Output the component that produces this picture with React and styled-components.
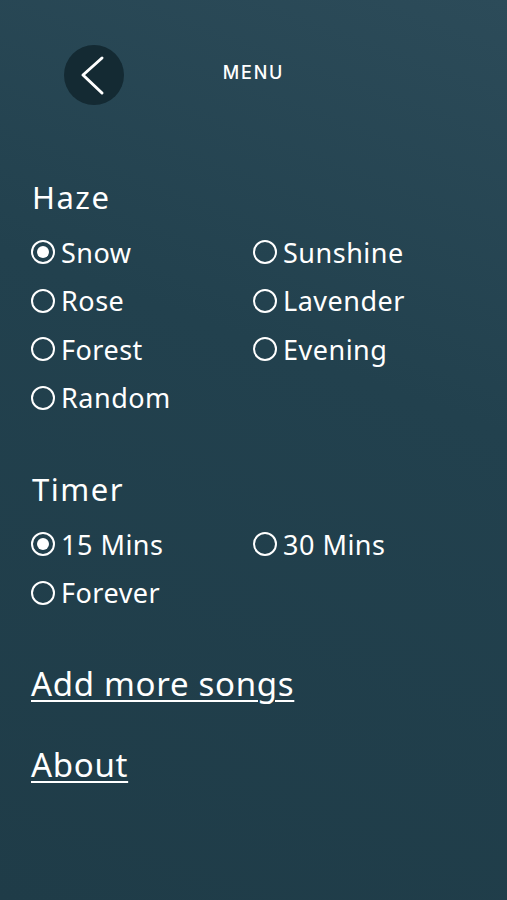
import React, { useState } from "react";
import styled, { createGlobalStyle } from "styled-components";

const Global = createGlobalStyle`
  html, body { margin: 0; padding: 0; }
  body { font-family: "Noto Sans", "Open Sans", sans-serif; color: #fff; background: #1f3c48; }
`;

const Page = styled.div`
  min-height: 900px;
  box-sizing: border-box;
  padding: 45px 0 0 0;
  background: linear-gradient(200deg, #2c4b59 0%, #22414e 40%, #1f3c48 100%);
`;

const Header = styled.header`
  display: grid;
  grid-template-columns: 1fr auto 1fr;
  align-items: center;
  height: 60px;
  padding-left: 64px;
`;

const BackButton = styled.button`
  width: 60px;
  height: 60px;
  border-radius: 50%;
  border: none;
  background: #142a33;
  display: flex;
  align-items: center;
  justify-content: center;
  padding: 0;
  cursor: pointer;
  justify-self: start;
`;

const Title = styled.div`
  font-family: "Inter", "Lato", sans-serif;
  font-size: 18px;
  font-weight: 500;
  letter-spacing: 1.8px;
  transform: translateX(-32px);
  margin-top: -6px;
`;

const Content = styled.main`
  padding: 0 32px 0 31px;
`;

const Section = styled.section`
  margin-top: ${(p) => p.$top}px;
`;

const Heading = styled.h2`
  margin: 0 0 11px 1px;
  font-size: 31px;
  font-weight: 400;
  letter-spacing: 1.5px;
  line-height: 40px;
`;

const Options = styled.div`
  display: grid;
  grid-template-columns: 222px 1fr;
  grid-auto-rows: 48.5px;
`;

const Option = styled.label`
  display: flex;
  align-items: center;
  gap: 6px;
  font-size: 27px;
  letter-spacing: 0.5px;
  line-height: 1;
  cursor: pointer;
`;

const Circle = styled.span`
  width: 24px;
  height: 24px;
  box-sizing: border-box;
  border: 2.5px solid #fff;
  border-radius: 50%;
  display: flex;
  align-items: center;
  justify-content: center;
  flex-shrink: 0;
  &::after {
    content: "";
    width: 12px;
    height: 12px;
    border-radius: 50%;
    background: #fff;
    display: ${(p) => (p.$on ? "block" : "none")};
  }
`;

const LinkText = styled.a`
  display: block;
  color: #fff;
  font-size: 33px;
  letter-spacing: 0.7px;
  line-height: 44px;
  text-decoration: underline;
  text-decoration-thickness: 2px;
  text-underline-offset: 4px;
  margin-top: ${(p) => p.$top}px;
  width: max-content;
`;

function Group({ title, items, value, onChange, top }) {
  return (
    <Section $top={top}>
      <Heading>{title}</Heading>
      <Options>
        {items.map((it) => (
          <Option key={it} onClick={() => onChange(it)}>
            <Circle $on={value === it} />
            {it}
          </Option>
        ))}
      </Options>
    </Section>
  );
}

export default function App() {
  const [haze, setHaze] = useState("Snow");
  const [timer, setTimer] = useState("15 Mins");
  return (
    <>
      <Global />
      <Page>
        <Header>
          <BackButton aria-label="Back">
            <svg width="60" height="60" viewBox="0 0 60 60">
              <path d="M38 13 L19 30 L38 48" fill="none" stroke="#fff" strokeWidth="3" strokeLinecap="round" strokeLinejoin="round" />
            </svg>
          </BackButton>
          <Title>MENU</Title>
          <div />
        </Header>
        <Content>
          <Group
            top={72}
            title="Haze"
            items={["Snow", "Sunshine", "Rose", "Lavender", "Forest", "Evening", "Random"]}
            value={haze}
            onChange={setHaze}
          />
          <Group
            top={47}
            title="Timer"
            items={["15 Mins", "30 Mins", "Forever"]}
            value={timer}
            onChange={setTimer}
          />
          <LinkText href="#" $top={45}>Add more songs</LinkText>
          <LinkText href="#" $top={37}>About</LinkText>
        </Content>
      </Page>
    </>
  );
}
